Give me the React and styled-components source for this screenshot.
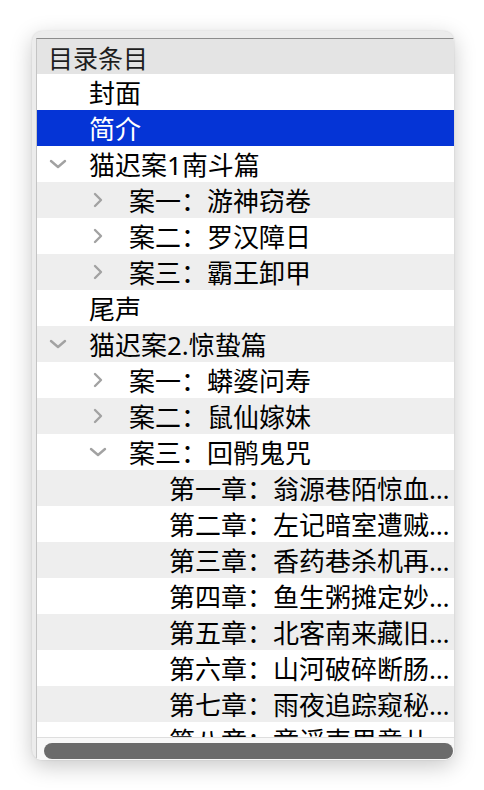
import React from "react";
import styled, { createGlobalStyle } from "styled-components";

const GlobalStyle = createGlobalStyle`
  html, body {
    margin: 0;
    padding: 0;
    background: #ffffff;
  }
  body {
    font-family: "Noto Sans", "Noto Sans CJK SC", sans-serif;
  }
`;

// 页面外层
const Page = styled.div`
  padding: 31px 0 0 32px;
  width: 484px;
  height: 790px;
  box-sizing: border-box;
  overflow: hidden;
`;

// 窗口框
const Window = styled.div`
  width: 422px;
  height: 729px;
  box-sizing: border-box;
  padding: 7px 0 0 4px;
  background: #ececec;
  border-radius: 10px;
  box-shadow: 0 6px 22px rgba(0, 0, 0, 0.22), 0 0 2px rgba(0, 0, 0, 0.12);
  overflow: hidden;
  display: flex;
  flex-direction: column;
`;

// 表格
const Table = styled.div`
  flex: 1;
  display: flex;
  flex-direction: column;
  background: #ffffff;
  border-top: 1px solid #8c8c8c;
  border-left: 1px solid #c4c4c4;
  min-height: 0;
`;

const Header = styled.div`
  height: 35px;
  flex-shrink: 0;
  display: flex;
  align-items: center;
  padding-left: 11px;
  background: #e4e4e4;
  color: #1e1e1e;
  font-size: 25px;
`;

const Body = styled.div`
  flex: 1;
  overflow: hidden;
  min-height: 0;
`;

const Row = styled.div`
  height: 36px;
  display: flex;
  align-items: center;
  padding-left: ${(p) => 12 + p.$level * 40}px;
  padding-right: 2px;
  background: ${(p) => (p.$selected ? "#0534d6" : p.$odd ? "#eeeeee" : "#ffffff")};
  color: ${(p) => (p.$selected ? "#ffffff" : "#000000")};
  font-size: 26px;
  white-space: nowrap;
`;

const Disclosure = styled.span`
  width: 18px;
  height: 36px;
  margin-right: 22px;
  flex-shrink: 0;
  display: flex;
  align-items: center;
  justify-content: center;
  color: #a2a2a2;
`;

const Label = styled.span`
  flex: 1;
  min-width: 0;
  overflow: hidden;
  text-overflow: ellipsis;
`;

// 横向滚动条
const ScrollBar = styled.div`
  height: 23px;
  flex-shrink: 0;
  box-sizing: border-box;
  border-top: 1px solid #dedede;
  background: #f8f8f8;
  padding: 5px 1px 1px 7px;
`;

const Thumb = styled.div`
  height: 16px;
  border-radius: 8px;
  background: #6b6b6b;
`;

const Chevron = ({ open }) =>
  open ? (
    <svg width="18" height="10" viewBox="0 0 18 10">
      <polyline points="2,2 9,8 16,2" fill="none" stroke="currentColor" strokeWidth="2.4" strokeLinecap="round" strokeLinejoin="round" />
    </svg>
  ) : (
    <svg width="12" height="16" viewBox="0 0 12 16">
      <polyline points="3,2 9,8 3,14" fill="none" stroke="currentColor" strokeWidth="2.4" strokeLinecap="round" strokeLinejoin="round" />
    </svg>
  );

const items = [
  { level: 0, text: "封面" },
  { level: 0, text: "简介", selected: true },
  { level: 0, text: "猫迟案1南斗篇", toggle: "open" },
  { level: 1, text: "案一：游神窃卷", toggle: "closed" },
  { level: 1, text: "案二：罗汉障日", toggle: "closed" },
  { level: 1, text: "案三：霸王卸甲", toggle: "closed" },
  { level: 0, text: "尾声" },
  { level: 0, text: "猫迟案2.惊蛰篇", toggle: "open" },
  { level: 1, text: "案一：蟒婆问寿", toggle: "closed" },
  { level: 1, text: "案二：鼠仙嫁妹", toggle: "closed" },
  { level: 1, text: "案三：回鹘鬼咒", toggle: "open" },
  { level: 2, text: "第一章：翁源巷陌惊血案" },
  { level: 2, text: "第二章：左记暗室遭贼手" },
  { level: 2, text: "第三章：香药巷杀机再起" },
  { level: 2, text: "第四章：鱼生粥摊定妙计" },
  { level: 2, text: "第五章：北客南来藏旧怨" },
  { level: 2, text: "第六章：山河破碎断肠人" },
  { level: 2, text: "第七章：雨夜追踪窥秘事" },
  { level: 2, text: "第八章：童谣声里意儿难" },
];

export default function App() {
  return (
    <>
      <GlobalStyle />
      <Page>
        <Window>
          <Table>
            <Header>目录条目</Header>
            <Body>
              {items.map((it, i) => (
                <Row key={i} $level={it.level} $odd={i % 2 === 1} $selected={it.selected}>
                  <Disclosure>{it.toggle && <Chevron open={it.toggle === "open"} />}</Disclosure>
                  <Label>{it.text}</Label>
                </Row>
              ))}
            </Body>
            <ScrollBar>
              <Thumb />
            </ScrollBar>
          </Table>
        </Window>
      </Page>
    </>
  );
}
